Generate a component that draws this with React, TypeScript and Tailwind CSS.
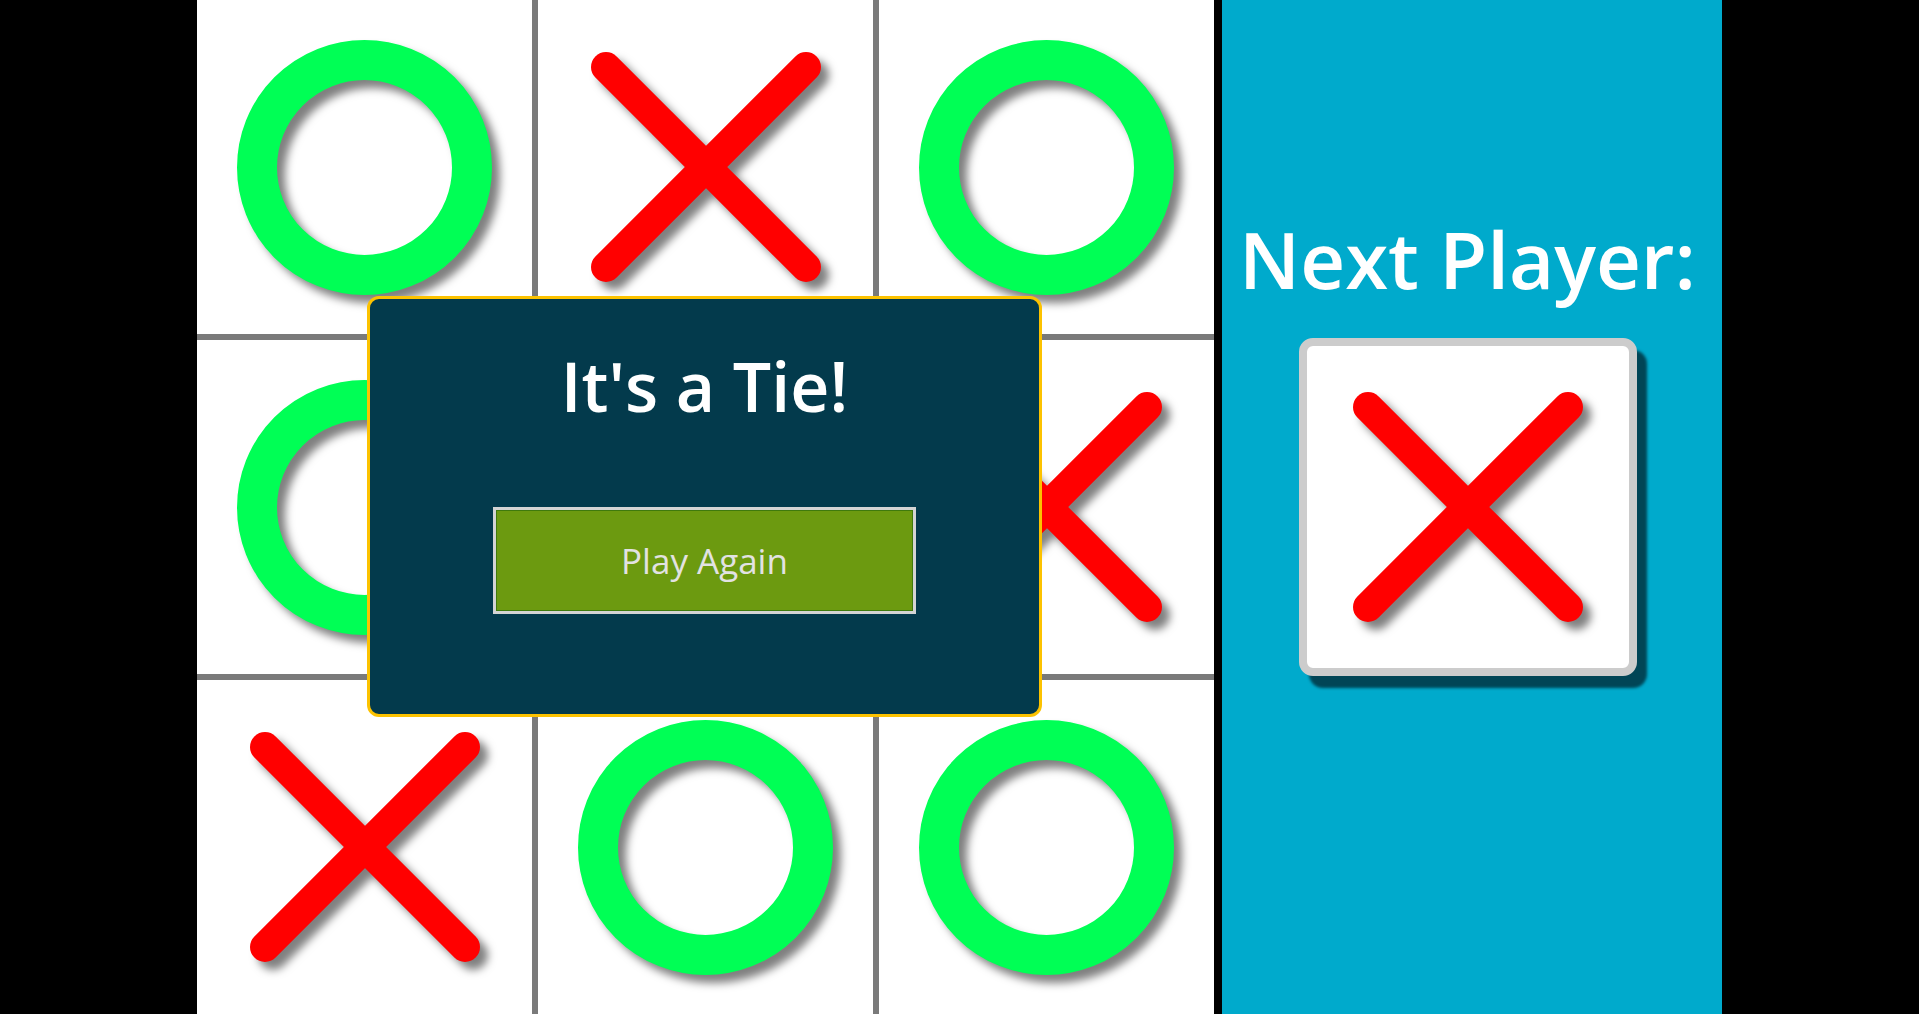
import React from "react";

type Mark = "X" | "O";

const board: Mark[] = ["O", "X", "O", "O", "X", "X", "X", "O", "O"];

function OMark() {
  return (
    <svg
      width={255}
      height={255}
      viewBox="0 0 255 255"
      className="[filter:drop-shadow(8px_8px_4px_rgba(0,0,0,0.5))]"
    >
      <circle cx={127.5} cy={127.5} r={107.5} fill="none" stroke="#00ff55" strokeWidth={40} />
    </svg>
  );
}

function XMark() {
  return (
    <svg
      width={230}
      height={230}
      viewBox="0 0 230 230"
      className="[filter:drop-shadow(8px_8px_4px_rgba(0,0,0,0.5))]"
    >
      <g stroke="#ff0000" strokeWidth={30} strokeLinecap="round">
        <line x1={15} y1={15} x2={215} y2={215} />
        <line x1={215} y1={15} x2={15} y2={215} />
      </g>
    </svg>
  );
}

export default function App() {
  return (
    <div
      className="flex h-[1014px] w-full justify-center bg-black"
      style={{ fontFamily: '"Open Sans", "Noto Sans", sans-serif' }}
    >
      <div className="flex h-full w-[1525px]">
        {/* Board */}
        <div className="relative h-full w-[1017px]">
          <div className="grid h-full w-full grid-cols-3 grid-rows-3 gap-[6px] bg-[#7a7a7a]">
            {board.map((m, i) => (
              <div key={i} className="flex items-center justify-center bg-white">
                {m === "O" ? <OMark /> : <XMark />}
              </div>
            ))}
          </div>

          {/* Tie dialog */}
          <div className="absolute inset-0 flex items-center justify-center">
            <div className="-ml-[2px] -mt-[1px] flex h-[421px] w-[675px] flex-col items-center rounded-[12px] border-[3px] border-[#fcc200] bg-[#033a4c] pt-[45px]">
              <h1 className="text-[68px] font-semibold leading-[84px] text-white">It's a Tie!</h1>
              <button className="mt-[79px] flex h-[107px] w-[423px] items-center justify-center border-[3px] border-[#d4d4d4] bg-[#6c9a10] text-[35px] leading-none text-[#e2e2e2] shadow-[inset_0_0_0_1px_#3f7a0c]">
                Play Again
              </button>
            </div>
          </div>
        </div>

        {/* Side panel */}
        <div className="flex h-full w-[508px] flex-col items-center border-l-[8px] border-black bg-[#00aacc] pr-[9px]">
          <div className="flex flex-1 flex-col justify-end">
            <h2 className="mb-[32px] whitespace-nowrap text-[78px] font-semibold leading-[94px] text-white">
              Next Player:
            </h2>
          </div>
          <div className="flex h-[338px] w-[338px] items-center justify-center rounded-[14px] border-[8px] border-[#cccccc] bg-white shadow-[10px_12px_3px_#014556]">
            <XMark />
          </div>
          <div className="flex-1" />
        </div>
      </div>
    </div>
  );
}
